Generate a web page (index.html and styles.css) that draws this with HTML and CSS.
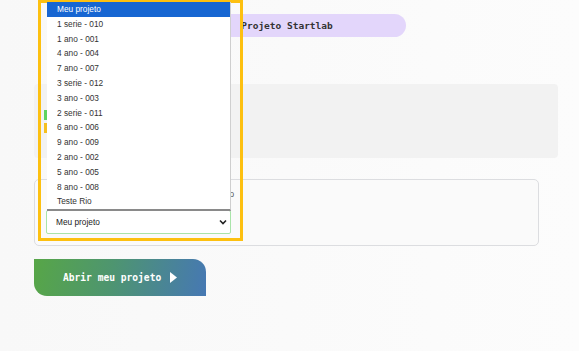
FILE: index.html
```html
<!DOCTYPE html>
<html lang="pt-BR">
<head>
    <meta charset="UTF-8" />
    <meta name="viewport" content="width=device-width, initial-scale=1.0" />
    <title>Meu projeto</title>
    <link rel="stylesheet" href="styles.css">
</head>
<body>
<div class="page">
    <!-- Header -->
    <div class="title-pill">Projeto Startlab</div>

    <!-- Status panel -->
    <div class="panel">
        <span class="mark mark-green"></span>
        <span class="mark mark-yellow"></span>
    </div>

    <!-- Project picker -->
    <div class="card">
        <label class="card-label" for="project">Selecione o seu projeto</label>
        <div class="select-wrap">
            <select id="project" class="select">
                <option>Meu projeto</option>
            </select>
            <svg class="chevron" width="8" height="6" viewBox="0 0 8 6">
                <path d="M1 1.5 L4 4.5 L7 1.5" fill="none" stroke="#222" stroke-width="1.6"/>
            </svg>
        </div>
    </div>

    <button class="open-btn">
        Abrir meu projeto
        <svg width="7" height="11" viewBox="0 0 7 11"><path d="M0 0 L7 5.5 L0 11 Z" fill="#fff"/></svg>
    </button>
</div>

<!-- Open dropdown and highlight -->
<div class="highlight"></div>
<ul class="dropdown">
    <li class="active">Meu projeto</li>
    <li>1 serie - 010</li>
    <li>1 ano - 001</li>
    <li>4 ano - 004</li>
    <li>7 ano - 007</li>
    <li>3 serie - 012</li>
    <li>3 ano - 003</li>
    <li>2 serie - 011</li>
    <li>6 ano - 006</li>
    <li>9 ano - 009</li>
    <li>2 ano - 002</li>
    <li>5 ano - 005</li>
    <li>8 ano - 008</li>
    <li>Teste Rio</li>
</ul>
</body>
</html>
```

FILE: styles.css
```css
body {
    margin: 0;
    background: linear-gradient(90deg, #f8f8f8, #fcfcfc);
    font-family: 'Liberation Sans', Arial, sans-serif;
    min-height: 351px;
}
.page {
    padding: 14px 0 0 34px;
    display: flex;
    flex-direction: column;
    align-items: flex-start;
}
/* Header pill */
.title-pill {
    margin-left: 134px;
    width: 238px;
    height: 23px;
    line-height: 23px;
    text-align: center;
    background: #e3d6fb;
    border-radius: 0 12px 12px 0;
    font-family: 'DejaVu Sans Mono', monospace;
    font-weight: bold;
    font-size: 9.5px;
    color: #333;
}
/* Gray panel */
.panel {
    margin-top: 47px;
    width: 524px;
    height: 74px;
    background: #f2f2f2;
    border-radius: 4px;
    box-sizing: border-box;
    padding: 26px 0 0 10px;
    display: flex;
    flex-direction: column;
    gap: 3px;
}
.mark {
    display: block;
    width: 3px;
    height: 10px;
}
.mark-green { background: #5fd45f; }
.mark-yellow { background: #f5c020; }
/* Card */
.card {
    margin-top: 21px;
    width: 505px;
    height: 67px;
    box-sizing: border-box;
    border: 1px solid #dcdde0;
    border-radius: 5px;
    background: #fafafa;
    padding: 9px 0 0 11px;
}
.card-label {
    display: block;
    font-size: 8.3px;
    color: #555;
    width: 188px;
    text-align: right;
    height: 12px;
}
.select-wrap {
    position: relative;
    margin-top: 9px;
    width: 185px;
}
.select {
    appearance: none;
    display: block;
    width: 185px;
    height: 24px;
    padding: 0 0 0 9px;
    border: 1px solid #a9e4a9;
    border-radius: 2px;
    background: #fff;
    font-family: 'Liberation Sans', Arial, sans-serif;
    font-size: 8.3px;
    color: #222;
}
.chevron {
    position: absolute;
    right: 4px;
    top: 9px;
}
/* Button */
.open-btn {
    margin-top: 13px;
    width: 172px;
    height: 37px;
    border: 0;
    border-radius: 0 13px 0 13px;
    background: linear-gradient(100deg, #57a647 0%, #4e9570 45%, #4678b3 100%);
    color: #fff;
    font-family: 'DejaVu Sans Mono', monospace;
    font-weight: bold;
    font-size: 9.6px;
    display: flex;
    align-items: center;
    gap: 9px;
    padding: 0 0 0 29px;
    cursor: pointer;
}
/* Overlays */
.highlight {
    position: absolute;
    left: 38px;
    top: 0;
    width: 205px;
    height: 241px;
    box-sizing: border-box;
    border: 3px solid #fdc010;
}
.dropdown {
    position: absolute;
    left: 47px;
    top: 2px;
    width: 184px;
    margin: 0;
    padding: 0;
    list-style: none;
    background: #fff;
    box-sizing: border-box;
    border-right: 1px solid #cfcfcf;
    border-bottom: 2px solid #8a8a8a;
    font-size: 8.3px;
    color: #333;
}
.dropdown li {
    height: 14.8px;
    line-height: 14.8px;
    padding-left: 10px;
}
.dropdown li.active {
    background: #1766d2;
    color: #fff;
}
```
